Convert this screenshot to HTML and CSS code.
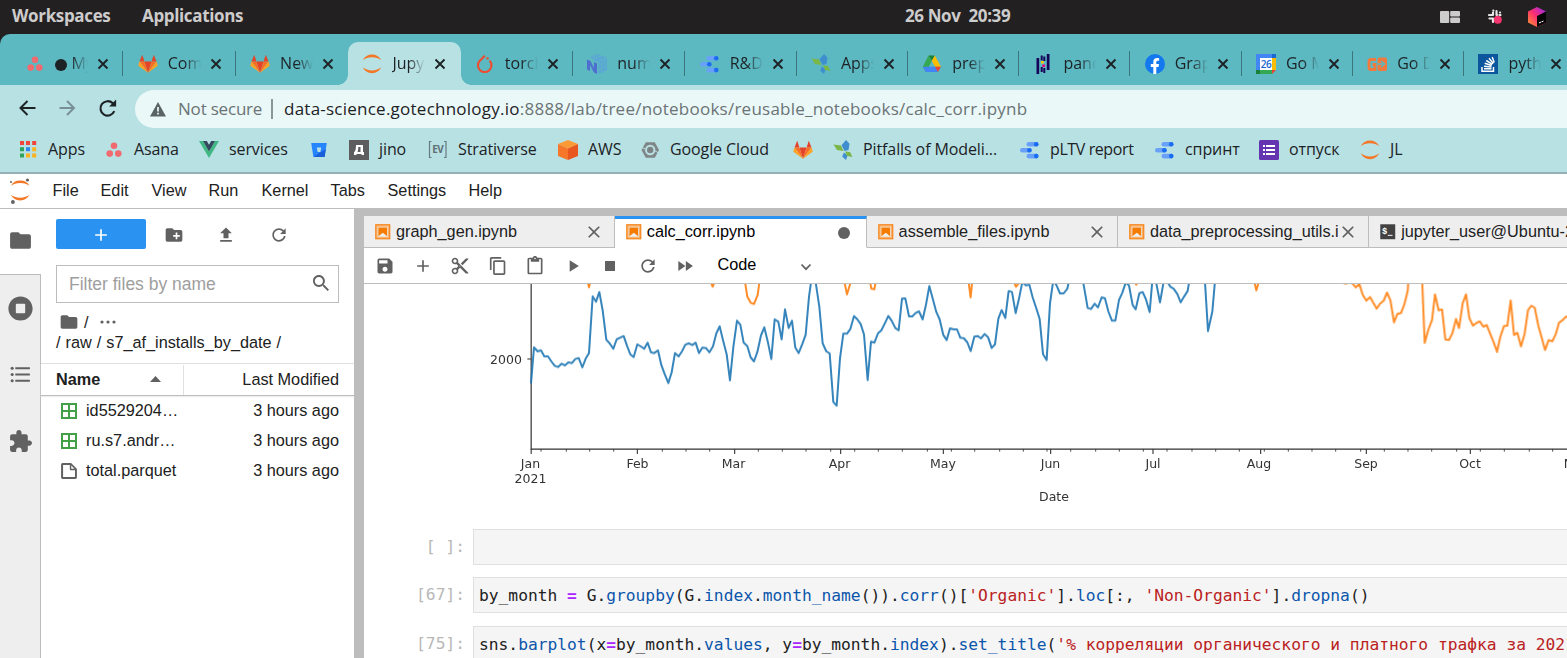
FILE: index.html
```html
<!DOCTYPE html>
<html lang="en">
<head>
<meta charset="utf-8">
<title>calc_corr.ipynb - JupyterLab</title>
<link rel="stylesheet" href="styles.css">
</head>
<body>
<svg class="defs" width="0" height="0">
  <symbol id="gitlab" viewBox="0 0 24 24"><path fill="#e24329" d="M12 22.5 16.3 9H7.7ZM1.8 9h5.9L5.1 1ZM22.2 9h-5.9L18.9 1Z"/><path fill="#fc6d26" d="M12 22.5 7.7 9H1.8ZM12 22.5 16.3 9h5.9Z"/><path fill="#fca326" d="M1.8 9 .4 13.2c-.1.4 0 .8.4 1.1L12 22.5ZM22.2 9l1.4 4.2c.1.4 0 .8-.4 1.1L12 22.5Z"/></symbol>
  <symbol id="asana" viewBox="0 0 20 20"><g fill="#f06a6f"><circle cx="10" cy="5.800" r="3.300"/><circle cx="5.700" cy="13.600" r="3.300"/><circle cx="14.300" cy="13.600" r="3.300"/></g></symbol>
  <symbol id="rings" viewBox="0 0 20 20"><g fill="#f37726"><path d="M.8 6.200C2.500 2.500 6 .5 10 .5s7.500 2 9.200 5.700C17 4.200 13.700 3.200 10 3.200S3 4.200.8 6.200Z"/><path d="M.8 13.300c1.700 3.700 5.200 5.900 9.200 5.900s7.500-2.200 9.200-5.900c-2.200 2-5.500 3.100-9.200 3.100s-7-1.100-9.200-3.100Z"/></g></symbol>
  <symbol id="studio" viewBox="0 0 20 20"><g fill="#6aa1f8"><rect x="6.500" y="2" width="12" height="4.600" rx="2.300"/><rect x="0" y="7.900" width="12" height="4.600" rx="2.300"/><rect x="6.500" y="13.800" width="12" height="4.600" rx="2.300"/></g><g fill="#1a6cf0"><circle cx="16.200" cy="4.300" r="2.300"/><circle cx="9.300" cy="10.200" r="2.300"/><circle cx="16.200" cy="16.100" r="2.300"/></g></symbol>
  <symbol id="flyer" viewBox="0 0 20 20"><path fill="#3e8ed0" d="M13 0 16.500 3.800 15.500 10 11.500 11 8.500 5.200Z"/><path fill="#7ab648" d="M.5 4.500 8 5.500 10.500 11 4 10Z"/><path fill="#3e8ed0" d="m11 12.500 3.500 3L13 20l-3.800-3.500Z"/><path fill="#7ab648" d="m12 11.500 5 .5 2.500 5-5.500-1Z"/></symbol>
  <symbol id="x" viewBox="0 0 12 12"><path d="m1.500 1.500 9 9m0-9-9 9" fill="none" stroke="#1d2225" stroke-width="1.900"/></symbol>
  <symbol id="close" viewBox="0 0 24 24"><path d="M19 6.410 17.590 5 12 10.590 6.410 5 5 6.410 10.590 12 5 17.590 6.410 19 12 13.410 17.590 19 19 17.590 13.410 12z"/></symbol>
  <symbol id="add" viewBox="0 0 24 24"><path d="M19 13h-6v6h-2v-6H5v-2h6V5h2v6h6v2z"/></symbol>
  <symbol id="folder" viewBox="0 0 24 24"><path d="M10 4H4c-1.100 0-1.990.9-1.990 2L2 18c0 1.100.9 2 2 2h16c1.100 0 2-.9 2-2V8c0-1.100-.9-2-2-2h-8l-2-2z"/></symbol>
  <symbol id="refresh" viewBox="0 0 18 18"><path d="M9 13.500c-2.490 0-4.500-2.010-4.500-4.500S6.510 4.500 9 4.500c1.240 0 2.360.52 3.170 1.330L10 8h5V3l-1.760 1.760C12.150 3.680 10.660 3 9 3 5.690 3 3.010 5.690 3.010 9S5.690 15 9 15c2.970 0 5.430-2.160 5.900-5h-1.520c-.46 2-2.240 3.500-4.380 3.500z"/></symbol>
  <symbol id="notebook" viewBox="0 0 22 22"><path fill="#fbb26c" d="M1.600 1.600h18.800v18.800H1.600z"/><path fill="#f6841a" d="M1.600 1.600h18.800v18.800H1.600zM2.900 2.900v16.200h16.200V2.900z" fill-rule="evenodd"/><path fill="#eee" d="M4.600 4.600h12.800v12.800H4.600z"/><path fill="#f57c00" d="m16.500 16.500-5.400-4.300-5.600 4.300v-11h11z"/></symbol>
  <symbol id="sheet" viewBox="0 0 22 22"><path fill="#43a047" d="M2.200 2.200v17.600h17.600V2.200H2.200zm15.400 7.700h-5.500V4.400h5.500v5.500zM9.900 4.400v5.500H4.400V4.400h5.500zm-5.500 7.700h5.500v5.500H4.400v-5.500zm7.700 5.500v-5.500h5.500v5.500h-5.500z"/></symbol>
</svg>

<header class="system">
  <span class="workspaces">Workspaces</span><span class="applications">Applications</span>
  <time class="clock">26 Nov&nbsp; 20:39</time>
  <div class="tray">
    <svg width="20" height="12" viewBox="0 0 20 12" fill="#cdcccc"><rect width="9.200" height="12" rx="1"/><rect x="10.200" width="9.800" height="5.500" rx="1"/><rect x="10.200" y="6.500" width="9.800" height="5.500" rx="1"/></svg>
    <svg width="16" height="16" viewBox="0 0 16 16"><g stroke="#e8e8e8" stroke-width="2.200" stroke-linecap="round"><path d="M6 3.500v2.500M9.500 2v4M3.500 6h2.500M2.500 9.500h3.500M6 10v3M10 6h.1M12.500 6h1M6.300 1.600h.1M2 6h.1M13 3.500h.1"/></g><circle cx="10.800" cy="10.800" r="4" fill="#f4356f"/></svg>
    <svg width="20" height="22" viewBox="0 0 20 22"><defs><linearGradient id="tb" x1="0" y1="1" x2="1" y2="0"><stop stop-color="#ff9a2b"/><stop offset=".5" stop-color="#fd2d72"/><stop offset="1" stop-color="#8f2cf5"/></linearGradient></defs><path fill="url(#tb)" d="m10 1 9 4.500v11L10 21l-9-4.500v-11z"/><path fill="#050505" d="m10 10 9-4.500v11L10 21z"/><path stroke="#fff" d="m12 17 2.500-1.200m.5 0 1.500-.8"/></svg>
  </div>
</header>

<nav class="tabs">
  <div class="tab"><svg class="fav"><use href="#asana"/></svg><span class="label"><i class="dot"></i> My</span><svg class="x"><use href="#x"/></svg></div>
  <div class="tab"><svg class="fav"><use href="#gitlab"/></svg><span class="label">Com</span><svg class="x"><use href="#x"/></svg></div>
  <div class="tab plain"><svg class="fav"><use href="#gitlab"/></svg><span class="label">New</span><svg class="x"><use href="#x"/></svg></div>
  <div class="tab active"><svg class="fav"><use href="#rings"/></svg><span class="label">Jupy</span><svg class="x"><use href="#x"/></svg></div>
  <div class="tab"><svg class="fav" viewBox="0 0 20 20"><path fill="none" stroke="#ee4c2c" stroke-width="2.100" d="M9.800 1.800 4.800 6.800a6.700 6.700 0 1 0 9.800 0"/><circle cx="12.500" cy="4.400" r="1.200" fill="#ee4c2c"/></svg><span class="label">torch</span><svg class="x"><use href="#x"/></svg></div>
  <div class="tab"><svg class="fav" viewBox="0 0 20 20"><path fill="#5b9fe0" opacity=".75" d="M3 3.500 10.500 0 20 3.500 11 8zM11 8.500l9-4V16l-9 4z"/><path stroke="#5cb8c1" stroke-width=".7" d="M12 8v12m3-14v12m3-13v12M11 12l9-4m-9 8 9-4M5 2l10 4M8 1l10 3M6 5l9-4"/><path fill="#4d6fd0" d="M0 5.500 3.500 7l3.500 7V8l3 1.500V20l-3-1.500L3 11v6l-3-1.500z"/></svg><span class="label">num</span><svg class="x"><use href="#x"/></svg></div>
  <div class="tab"><svg class="fav"><use href="#studio"/></svg><span class="label">R&amp;D</span><svg class="x"><use href="#x"/></svg></div>
  <div class="tab"><svg class="fav"><use href="#flyer"/></svg><span class="label">Apps</span><svg class="x"><use href="#x"/></svg></div>
  <div class="tab"><svg class="fav" viewBox="0 0 20 20"><path fill="#188038" d="M6.500 1.500h6.300l-3 5.200z"/><path fill="#34a853" d="M6.500 1.500 9.800 7 4 18 .8 13z"/><path fill="#fbbc04" d="M12.800 1.500 19 12.700h-6L9.800 6.700z"/><path fill="#4285f4" d="M3.900 12.700h9.500l2.500 5.300H3.800L.8 13z"/><path fill="#ea4335" d="M13 12.700h6L15.900 18z"/></svg><span class="label">prep</span><svg class="x"><use href="#x"/></svg></div>
  <div class="tab"><svg class="fav" viewBox="0 0 20 20"><path fill="#150458" d="M3.500 4h2.700v16H3.500zM13.800 0h2.700v16h-2.700zM7.700 1.500h2v5h-2zM10.300 2.500h2v4.500h-2zM7.700 13h2v5h-2zM10.300 14h2v5h-2z"/><path fill="#ffca00" d="M8 7h2.800v2.500H8z"/><path fill="#e70488" d="M9.300 10.500h2.800V13H9.300z"/></svg><span class="label">pand</span><svg class="x"><use href="#x"/></svg></div>
  <div class="tab"><svg class="fav" viewBox="0 0 20 20"><circle cx="10" cy="10" r="10" fill="#1479ef"/><path fill="#fff" d="M8.300 20v-7H5.800v-3h2.500V8c0-2.600 1.500-4 3.800-4 1 0 2 .2 2 .2v2.500h-1.200c-1.200 0-1.600.7-1.600 1.500V10H14l-.5 3h-2.200v7z"/></svg><span class="label">Grap</span><svg class="x"><use href="#x"/></svg></div>
  <div class="tab"><svg class="fav" viewBox="0 0 20 20"><path fill="#4285f4" d="M0 0h18v4H4v12H0z"/><path fill="#1a67d2" d="M16 0h4v4h-4z"/><path fill="#fbbc04" d="M16 4h4v12h-4z"/><path fill="#34a853" d="M0 16h16v4H0z"/><path fill="#188038" d="M0 16h4v4H0z"/><path fill="#ea4335" d="M16 16h4l-4 4z"/><path fill="#fff" d="M4 4h12v12H4z"/><text class="date" x="10" y="13.800" text-anchor="middle">26</text></svg><span class="label">Go M</span><svg class="x"><use href="#x"/></svg></div>
  <div class="tab"><svg class="fav" viewBox="0 0 20 20"><path fill="none" stroke="#f07a3e" stroke-width="2.800" d="M9 5.500H4c-1.500 0-2 .8-2 2v6c0 1.300.7 2 2 2h4v-5H5.500"/><rect x="10.500" y="3.500" width="9.500" height="13.500" rx="2" fill="#f07a3e"/><path stroke="#5cb8c1" stroke-width="1.500" d="M10 10h6M14 7l3.500 3-3.500 3" fill="none"/></svg><span class="label">Go D</span><svg class="x"><use href="#x"/></svg></div>
  <div class="tab last"><svg class="fav" viewBox="0 0 20 20"><path fill="#0b569c" d="M0 0h20v20H0z"/><path fill="none" stroke="#fff" stroke-width="1.500" d="M4 13v4.300h11.500V13M6 14.800h7.500M6 12.200l7.500.9M6.700 9.300l7 2.200M8.300 6.500l6 3.800M11 4.200l4.300 5.300M14.200 3l2 5.500"/></svg><span class="label">pyth</span><svg class="x"><use href="#x"/></svg></div>
</nav>

<div class="address">
  <svg class="back" width="20" height="20" viewBox="0 0 20 20"><path d="M18.500 10H3.500m7-7-7 7 7 7" fill="none" stroke="#1d2225" stroke-width="2"/></svg>
  <svg class="fwd" width="20" height="20" viewBox="0 0 20 20"><path d="M1.500 10H16m-7-7 7 7-7 7" fill="none" stroke="#789095" stroke-width="1.900"/></svg>
  <svg class="reload" width="20" height="20" viewBox="0 0 20 20"><path d="M16.300 13.200A7.200 7.200 0 1 1 14.800 5.300L16.500 7" fill="none" stroke="#1d2225" stroke-width="2.100"/><path d="M18.100 1.500v7h-7z" fill="#1d2225"/></svg>
  <div class="omnibox">
    <svg width="16" height="15" viewBox="0 0 16 15"><path fill="#5a6466" d="M8 0 16 14.500H0z"/><path stroke="#ebf8f8" stroke-width="1.700" d="M8 5v4.500M8 10.800v1.700"/></svg>
    <span class="secure">Not secure</span><span class="bar"></span>
    <span class="url"><b>data-science.gotechnology.io</b>:8888/lab/tree/notebooks/reusable_notebooks/calc_corr.ipynb</span>
  </div>
</div>

<div class="bookmarks">
  <a class="b1"><svg viewBox="0 0 20 20"><path fill="#f0453a" d="M2 1h4v4H2zM8 1h4v4H8zM14.200 1h4v4h-4z"/><path fill="#2fa35a" d="M2 7.200h4v4H2zM2 13.500h4v4H2z"/><path fill="#2f86ee" d="M8 7.200h4v4H8z"/><path fill="#fbb21f" d="M14.200 7.200h4v4h-4zM8 13.500h4v4H8zM14.200 13.500h4v4h-4z"/></svg><span>Apps</span></a>
  <a class="b2"><svg><use href="#asana"/></svg><span>Asana</span></a>
  <a class="b3"><svg viewBox="0 0 20 20"><path fill="#41b883" d="M0 1h4l6 10.500L16 1h4L10 18z"/><path fill="#34495e" d="M4 1h3.800L10 4.800 12.200 1H16l-6 10.500z"/></svg><span>services</span></a>
  <a class="b4"><svg viewBox="0 0 20 20"><path fill="#2684ff" d="M2.200 3h15.600l-2.200 14H4.400z"/><path fill="#1b5fd8" d="M11 12.500 16.800 9 15.600 17H4.600z"/><path fill="#b8e1e4" d="M7.800 7.500h4.400l-.8 4.500H8.600z"/></svg></a>
  <a class="b5"><svg viewBox="0 0 20 20"><path fill="#5d5d60" d="M0 0h20v20H0z"/><path fill="#fff" fill-rule="evenodd" d="M7 5h7v7h1v3h-2.500v-1h-5v1H5v-3c1.300 0 2-3 2-7zm2.300 2c0 2-.2 3.600-.8 5h3V7z"/></svg><span>jino</span></a>
  <a class="b6"><svg viewBox="0 0 20 20"><path fill="none" stroke="#667b80" stroke-width="1.200" d="M3.500 1.500h-2v16h2M16 1.500h2v16h-2"/><text class="ev" x="9.800" y="13.300" text-anchor="middle">EV</text></svg><span>Strativerse</span></a>
  <a class="b7"><svg viewBox="0 0 20 20"><path fill="#fc9b36" d="m10 0 10 4-10 4.500L0 4z"/><path fill="#f6762a" d="m0 4 10 4.500V20L0 16z"/><path fill="#e8571f" d="M20 4 10 8.500V20l10-4z"/></svg><span>AWS</span></a>
  <a class="b8"><svg viewBox="0 0 20 20"><path fill="#808587" d="M5.800 2.300h9L19 10l-4.200 7.700h-9L1.500 10z"/><circle cx="10.200" cy="10" r="4.200" fill="none" stroke="#b8e1e4" stroke-width="2"/><path stroke="#b8e1e4" d="m1 7 4 2m14 4-4-2"/><circle cx="10.200" cy="10" r="2" fill="#7b8284"/></svg><span>Google Cloud</span></a>
  <a class="b9"><svg><use href="#gitlab"/></svg></a>
  <a class="b10"><svg><use href="#flyer"/></svg><span>Pitfalls of Modeli...</span></a>
  <a class="b11"><svg><use href="#studio"/></svg><span>pLTV report</span></a>
  <a class="b12"><svg><use href="#studio"/></svg><span>спринт</span></a>
  <a class="b13"><svg viewBox="0 0 20 20"><rect width="20" height="20" rx="1.500" fill="#6535b1"/><path stroke="#fff" stroke-width="2" d="M4 6h2m1 0h9M4 10h2m1 0h9M4 14h2m1 0h9"/></svg><span>отпуск</span></a>
  <a class="b14"><svg><use href="#rings"/></svg><span>JL</span></a>
</div>

<nav class="menubar">
  <svg class="jp" width="22" height="28" viewBox="0 0 22 28"><g fill="#f37726"><path d="M2 9.800C3.500 6.400 7 4.500 11.200 4.500s7.700 1.900 9.200 5.300c-2-1.700-5.200-2.800-9.200-2.800S4 8.100 2 9.800Z"/><path d="M2 18.800c1.500 3.500 5 5.600 9.200 5.600s7.700-2.100 9.200-5.600c-2 1.700-5.200 2.900-9.200 2.900S4 20.500 2 18.800Z"/></g><g fill="#616161"><circle cx="2" cy="6" r="1"/><circle cx="18.500" cy="4" r="1.600"/><circle cx="3.900" cy="26" r="1.900"/></g></svg>
  <span class="m1">File</span><span class="m2">Edit</span><span class="m3">View</span><span class="m4">Run</span><span class="m5">Kernel</span><span class="m6">Tabs</span><span class="m7">Settings</span><span>Help</span>
</nav>

<main class="lab">
  <aside class="rail">
    <div class="current"><svg width="25" height="25"><use href="#folder"/></svg></div>
    <svg class="running" width="25" height="25" viewBox="0 0 512 512"><path d="M256 8C119 8 8 119 8 256s111 248 248 248 248-111 248-248S393 8 256 8zm96 328c0 8.800-7.200 16-16 16H176c-8.800 0-16-7.200-16-16V176c0-8.800 7.200-16 16-16h160c8.800 0 16 7.200 16 16v160z"/></svg>
    <svg class="toc" width="25" height="25" viewBox="0 0 24 24"><path d="M7 5h14v2H7zM7 11h14v2H7zM7 17h14v2H7z"/><circle cx="4" cy="6" r="1.500"/><circle cx="4" cy="12" r="1.500"/><circle cx="4" cy="18" r="1.500"/></svg>
    <svg class="ext" width="25" height="25" viewBox="0 0 24 24"><path d="M20.500 11H19V7c0-1.100-.9-2-2-2h-4V3.500C13 2.120 11.880 1 10.500 1S8 2.120 8 3.500V5H4c-1.100 0-1.990.9-1.990 2v3.800H3.500c1.490 0 2.700 1.210 2.700 2.700s-1.210 2.700-2.700 2.700H2V20c0 1.100.9 2 2 2h3.800v-1.500c0-1.490 1.210-2.700 2.700-2.700 1.490 0 2.700 1.210 2.700 2.700V22H17c1.100 0 2-.9 2-2v-4h1.500c1.380 0 2.500-1.120 2.500-2.500S21.880 11 20.500 11z"/></svg>
  </aside>

  <section class="files">
    <div class="actions">
      <button class="launch"><svg width="20" height="20"><use href="#add"/></svg></button>
      <svg class="newdir" width="20" height="20" viewBox="0 0 24 24"><path d="M20 6h-8l-2-2H4c-1.110 0-1.990.89-1.990 2L2 18c0 1.110.89 2 2 2h16c1.110 0 2-.89 2-2V8c0-1.110-.89-2-2-2zm-1 8h-3v3h-2v-3h-3v-2h3V9h2v3h3v2z"/></svg>
      <svg class="upload" width="20" height="20" viewBox="0 0 24 24"><path d="M9 16h6v-6h4l-7-7-7 7h4zm-4 2h14v2H5z"/></svg>
      <svg class="reloaddir" width="20" height="20"><use href="#refresh"/></svg>
    </div>
    <div class="filter"><span>Filter files by name</span><svg width="20" height="20" viewBox="0 0 18 18"><path d="M12.100 10.900h-.7l-.2-.2c.8-.9 1.300-2.200 1.300-3.500 0-3-2.400-5.400-5.400-5.400S1.800 4.200 1.800 7.100s2.400 5.400 5.400 5.400c1.300 0 2.500-.5 3.500-1.300l.2.200v.7l4.100 4.100 1.200-1.200-4.100-4.100zm-5 0c-2.100 0-3.700-1.700-3.700-3.700s1.700-3.700 3.700-3.700 3.700 1.700 3.700 3.700-1.600 3.700-3.700 3.700z"/></svg></div>
    <div class="crumbs">
      <div class="root"><svg width="20" height="20"><use href="#folder"/></svg><span>/</span><svg class="more" width="16" height="4" viewBox="0 0 16 4"><circle cx="2" cy="2" r="1.600"/><circle cx="8" cy="2" r="1.600"/><circle cx="14" cy="2" r="1.600"/></svg></div>
      <div class="path">/ raw / s7_af_installs_by_date /</div>
    </div>
    <div class="thead"><div class="name">Name<svg width="11" height="6" viewBox="0 0 11 6"><path d="M0 6 5.500 0 11 6z"/></svg></div><div class="mod">Last Modified</div></div>
    <div class="row"><svg width="20" height="20"><use href="#sheet"/></svg><span>id5529204…</span><span class="ago">3 hours ago</span></div>
    <div class="row"><svg width="20" height="20"><use href="#sheet"/></svg><span>ru.s7.andr…</span><span class="ago">3 hours ago</span></div>
    <div class="row"><svg width="20" height="20" viewBox="0 0 22 22"><path d="M19.300 8.200l-5.500-5.500c-.3-.3-.7-.5-1.200-.5H3.900c-.8.1-1.600.9-1.600 1.800v14.100c0 .9.7 1.600 1.600 1.600h14.200c.9 0 1.600-.7 1.600-1.600V9.400c.1-.5-.1-.9-.4-1.200zm-5.800-3.300l3.400 3.600h-3.400V4.900zm3.900 12.700H4.700c-.1 0-.2 0-.2-.2V4.700c0-.2.1-.3.2-.3h7.200v4.400s0 .8.3 1.100c.3.3 1.100.3 1.100.3h4.300v7.200s-.1.2-.2.2z"/></svg><span>total.parquet</span><span class="ago">3 hours ago</span></div>
  </section>

  <section class="dock">
    <div class="docktabs">
      <div class="dt"><svg class="nb"><use href="#notebook"/></svg><span>graph_gen.ipynb</span><svg class="cl"><use href="#close"/></svg></div>
      <div class="dt on"><svg class="nb"><use href="#notebook"/></svg><span>calc_corr.ipynb</span><i class="dirty"></i></div>
      <div class="dt"><svg class="nb"><use href="#notebook"/></svg><span>assemble_files.ipynb</span><svg class="cl"><use href="#close"/></svg></div>
      <div class="dt"><svg class="nb"><use href="#notebook"/></svg><span>data_preprocessing_utils.i</span><svg class="cl"><use href="#close"/></svg></div>
      <div class="dt"><svg class="nb" viewBox="0 0 22 22"><path fill="#424242" d="M1.600 1.600h18.800v18.800H1.600z"/><text class="sh" x="3.800" y="13.500">$</text><path stroke="#fff" stroke-width="1.200" d="M11 15.500h6"/></svg><span>jupyter_user@Ubuntu-2</span></div>
    </div>
    <div class="tools">
      <svg viewBox="0 0 24 24"><path d="M17 3H5c-1.110 0-2 .9-2 2v14c0 1.100.89 2 2 2h14c1.100 0 2-.9 2-2V7l-4-4zm-5 16c-1.660 0-3-1.340-3-3s1.340-3 3-3 3 1.340 3 3-1.340 3-3 3zm3-10H5V5h10v4z"/></svg>
      <svg><use href="#add"/></svg>
      <svg viewBox="0 0 24 24"><path d="M9.640 7.640c.23-.5.36-1.050.36-1.640 0-2.210-1.790-4-4-4S2 3.790 2 6s1.790 4 4 4c.59 0 1.140-.13 1.640-.36L10 12l-2.360 2.360C7.140 14.130 6.590 14 6 14c-2.210 0-4 1.790-4 4s1.790 4 4 4 4-1.790 4-4c0-.59-.13-1.140-.36-1.640L12 14l7 7h3v-1L9.640 7.640zM6 8c-1.100 0-2-.89-2-2s.9-2 2-2 2 .89 2 2-.9 2-2 2zm0 12c-1.100 0-2-.89-2-2s.9-2 2-2 2 .89 2 2-.9 2-2 2zm6-7.500c-.28 0-.5-.22-.5-.5s.22-.5.5-.5.5.22.5.5-.22.5-.5.5zM19 3l-6 6 2 2 7-7V3z"/></svg>
      <svg viewBox="0 0 18 18"><path d="M11.900 1H3.200c-.8 0-1.500.7-1.500 1.500v10.200h1.500V2.500h8.700V1zM14.100 3.900h-8c-.8 0-1.500.7-1.500 1.500v10.200c0 .8.7 1.500 1.500 1.500h8c.8 0 1.500-.7 1.500-1.500V5.400c-.1-.8-.7-1.500-1.500-1.500zm0 11.600h-8V5.400h8v10.100z"/></svg>
      <svg viewBox="0 0 24 24"><path d="M19 2h-4.180C14.400.84 13.300 0 12 0c-1.300 0-2.400.84-2.820 2H5c-1.100 0-2 .9-2 2v16c0 1.100.9 2 2 2h14c1.100 0 2-.9 2-2V4c0-1.100-.9-2-2-2zm-7 0c.55 0 1 .45 1 1s-.45 1-1 1-1-.45-1-1 .45-1 1-1zm7 18H5V4h2v3h10V4h2v16z"/></svg>
      <svg viewBox="0 0 24 24"><path d="M8 5v14l11-7z"/></svg>
      <svg viewBox="0 0 24 24"><path d="M6 6h12v12H6z"/></svg>
      <svg><use href="#refresh"/></svg>
      <svg viewBox="0 0 24 24"><path d="M4 18l8.500-6L4 6v12zm9-12v12l8.500-6L13 6z"/></svg>
      <span class="kind">Code</span>
      <svg class="chev" viewBox="0 0 12 8"><path d="m1.500 1.500 4.500 4.700 4.500-4.700" fill="none" stroke="#616161" stroke-width="1.700"/></svg>
    </div>
    <div class="notebook">
      <svg class="chart" width="1094" height="245" viewBox="473 284 1094 245">
        <g transform="translate(470 280) scale(.33333)" fill="none">
          <path stroke="#333" stroke-width="3.600" d="M183.500 0V507.500H3300"/>
          <path stroke="#333" stroke-width="3.300" d="M172 237h11M183.500 507v15M502 507v15M794 507v15M1112 507v15M1420 507v15M1742 507v15M2049 507v15M2372 507v15M2689 507v15M3001 507v15"/>
          <path stroke="#333" stroke-width="2.600" d="M213 507v8M289 507v8M359 507v8M431 507v8M577 507v8M648 507v8M719 507v8M865 507v8M937 507v8M1008 507v8M1082 507v8M1154 507v8M1225 507v8M1297 507v8M1372 507v8M1444 507v8M1514 507v8M1589 507v8M1660 507v8M1731 507v8M1802 507v8M1877 507v8M1948 507v8M2020 507v8M2091 507v8M2166 507v8M2237 507v8M2308 507v8M2383 507v8M2455 507v8M2526 507v8M2597 507v8M2672 507v8M2743 507v8M2814 507v8M2885 507v8M2960 507v8M3031 507v8M3103 507v8M3178 507v8M3248 507v8"/>
          <g stroke-width="6" stroke-linejoin="round" opacity=".9">
            <g stroke="#1f77b4">
              <polyline points="183,310 192,202 203,214 213,211 223,229 234,229 244,244 254,257 264,261 275,251 285,256 295,247 306,249 316,237 326,234 337,262 347,236 357,219 368,49 378,65 388,36 398,91 409,179 419,190 430,206 440,178 450,173 461,168 471,197 481,223 491,231 502,193 512,199 523,206 533,188 543,217 553,219 564,211 574,255 584,282 595,309 605,277 615,219 626,229 636,214 646,194 656,190 667,195 677,188 687,219 697,203 708,204 718,217 729,199 739,160 749,139 759,180 770,223 780,301 790,201 801,122 811,134 821,188 832,198 842,232 852,244 862,216 873,166 883,142 894,188 904,237 914,118 925,125 935,178 945,88 956,144 966,122 976,203 986,219 997,192 1007,164 1017,50 1024,0 1036,0 1048,80 1058,190 1069,214 1079,220 1090,366 1100,377 1110,235 1120,161 1131,161 1141,147 1152,108 1162,118 1172,132 1182,163 1193,300 1203,185 1213,188 1224,160 1234,151 1244,131 1255,108 1265,122 1276,144 1286,151 1296,56 1306,55 1317,109 1327,109 1337,99 1347,94 1358,118 1368,74 1378,18 1389,59 1399,96 1409,118 1420,165 1430,180 1440,145 1451,148 1461,148 1471,173 1482,175 1492,187 1502,213 1513,170 1523,168 1533,175 1544,162 1554,171 1565,204 1575,193 1585,116 1595,90 1606,114 1616,33 1626,36 1637,99 1647,56 1657,6 1668,16 1678,14 1688,52 1699,85 1709,117 1719,222 1730,240 1740,70 1750,0 1760,17 1770,40 1781,40 1792,26 1800,-10 1834,-20 1842,20 1853,84 1863,87 1874,71 1884,82 1895,52 1905,55 1915,94 1926,122 1936,122 1947,60 1957,38 1967,8 1977,16 1988,75 1997,88 2008,40 2018,36 2028,58 2039,96 2048,-10 2058,5 2070,67 2081,5 2091,4 2101,20 2111,26 2122,42 2132,67 2142,50 2153,33 2160,-10 2204,-10 2214,153 2227,95 2237,-20"/>
            </g>
            <g stroke="#ff7f0e">
              <path d="M352 0l5 22 5-22M720 0l8 20 8-20M825 5l7 45 10 18 10 4 11-27 6-45M1122 0l9 43 13-43M1200 5l4 21 9 2 5-28M1495 0l7 52 5-52M1632 5l6 15 9-12M1994 0l5 14 5-14M2352 0l7 31 9-31"/>
              <polyline transform="translate(2310)" points="310,8 318,11 328,5 337,10 347,22 358,12 368,44 379,62 390,51 400,69 410,86 420,71 431,62 441,38 451,60 462,127 472,102 483,99 493,73 503,33 506,-10 546,-10 554,189 565,149 576,120 585,43 596,91 606,88 616,178 627,180 637,160 648,117 657,144 668,70 678,43 688,114 699,137 709,129 719,124 730,140 740,135 750,160 761,187 771,215 781,170 792,138 802,137 812,61 822,165 832,158 843,199 854,160 864,90 874,77 884,83 895,137 905,173 915,210 926,180 937,184 947,163 957,128 968,120 978,110 990,108"/>
            </g>
          </g>
        </g>
        <g class="ticks">
          <text x="506" y="364">2000</text><text x="530.500" y="468">Jan</text><text x="530.500" y="483">2021</text><text x="637.500" y="468">Feb</text><text x="733.500" y="468">Mar</text><text x="839.500" y="468">Apr</text><text x="943" y="468">May</text><text x="1050.500" y="468">Jun</text><text x="1153" y="468">Jul</text><text x="1259" y="468">Aug</text><text x="1366" y="468">Sep</text><text x="1470" y="468">Oct</text><text x="1576" y="468">Nov</text><text x="1054" y="500.500">Date</text>
        </g>
      </svg>
      <div class="cell"><span class="prompt">[ ]:</span><pre></pre></div>
      <div class="cell"><span class="prompt">[67]:</span><pre>by_month <b>=</b> G.<i>groupby</i>(G.<i>index</i>.<i>month_name</i>()).<i>corr</i>()[<q>'Organic'</q>].<i>loc</i>[:, <q>'Non-Organic'</q>].<i>dropna</i>()</pre></div>
      <div class="cell third"><span class="prompt">[75]:</span><pre>sns.<i>barplot</i>(x<b>=</b>by_month.<i>values</i>, y<b>=</b>by_month.<i>index</i>).<i>set_title</i>(<q>'% корреляции органического и платного трафка за 2021'</q>)</pre></div>
    </div>
  </section>
</main>
</body>
</html>
```
FILE: styles.css
```css
* { box-sizing: border-box; }
body {
  margin: 0;
  width: 1567px;
  height: 658px;
  overflow: hidden;
  display: flex;
  flex-direction: column;
  background: #232021;
  font-family: "Open Sans", "Noto Sans", sans-serif;
  color: #1d2225;
}
svg { display: block; flex: none; }
.defs { position: absolute; }

/* desktop panel */
.system {
  height: 34px;
  flex: none;
  display: grid;
  grid-template-columns: 130px 763px 1fr auto;
  padding: 0 20px 0 12px;
  align-items: center;
  color: #cdcccc;
  font-weight: 700;
  font-size: 17px;
  letter-spacing: -.35px;
  line-height: 32px;
}
.workspaces, .applications, .clock { white-space: nowrap; height: 34px; }
.clock { letter-spacing: -.4px; }
.tray { display: flex; align-items: center; gap: 24px; }
.tray svg:nth-child(1) { margin-right: 3px; }

/* browser tab strip */
.tabs {
  height: 51px;
  flex: none;
  display: flex;
  padding: 8px 0 0 11px;
  background: #5cb8c1;
  border-top-left-radius: 10px;
  overflow: hidden;
}
.tab {
  position: relative;
  width: 112.400px;
  height: 43px;
  flex: none;
  display: flex;
  align-items: center;
  padding-left: 14.300px;
  font-size: 16px;
}
.tab:nth-child(n+7) { width: 111.250px; }
.tab::after {
  content: "";
  width: 1px;
  height: 25px;
  margin-left: auto;
  background: #3c757b;
}
.tab.plain::after, .tab.last::after { visibility: hidden; }
.fav { width: 20px; height: 20px; }
.label {
  width: 33px;
  margin: 0 9px 0 10px;
  line-height: 24px;
  padding-bottom: 1px;
  white-space: nowrap;
  overflow: hidden;
  mask-image: linear-gradient(90deg, #000 50%, transparent);
}
.dot {
  display: inline-block;
  width: 12px;
  height: 12px;
  border-radius: 50%;
  background: #1d2225;
  vertical-align: -2px;
}
.x { width: 12px; height: 12px; }
.tab.active { background: #b8e1e4; border-radius: 10px 10px 0 0; }
.tab.active::before, .tab.active::after {
  content: "";
  position: absolute;
  bottom: 0;
  width: 10px;
  height: 10px;
}
.tab.active::before { left: -10px; background: radial-gradient(circle at 0 0, transparent 9.500px, #b8e1e4 10px); }
.tab.active::after { right: -10px; background: radial-gradient(circle at 100% 0, transparent 9.500px, #b8e1e4 10px); }
.date { font: 600 10px "Open Sans", sans-serif; letter-spacing: -.5px; fill: #1a67d2; }

/* address bar */
.address {
  height: 43px;
  flex: none;
  display: flex;
  align-items: center;
  padding: 5px 0 0 17px;
  background: #b8e1e4;
}
.address .fwd { margin-left: 21px; }
.address .reload { margin-left: 20px; }
.address > svg { margin-top: -2px; }
.omnibox {
  flex: 1;
  height: 38px;
  margin-left: 17px;
  padding-left: 15px;
  display: flex;
  align-items: center;
  background: #ebf8f8;
  border-radius: 19px 0 0 19px;
  font-size: 17px;
  color: #6a7375;
  white-space: nowrap;
}
.secure { width: 84px; margin-left: 12px; padding-bottom: 2px; letter-spacing: -.2px; }
.bar { width: 2px; height: 20px; margin: 0 11px 0 9px; background: #8b9697; }
.url { padding-bottom: 2px; letter-spacing: .24px; }
.url b { font-weight: 400; color: #1d2225; }

/* bookmarks */
.bookmarks {
  height: 46px;
  flex: none;
  display: flex;
  align-items: center;
  padding-left: 18px;
  background: #b8e1e4;
  border-bottom: 2px solid #93b1b4;
  font-size: 16px;
  letter-spacing: -.1px;
  white-space: nowrap;
}
.bookmarks a { display: flex; align-items: center; gap: 10px; flex: none; }
.bookmarks span { padding-bottom: 2px; }
.bookmarks svg { width: 20px; height: 20px; }
.b1 { width: 86px; }
.b2 { width: 95px; }
.b3 { width: 110px; }
.b4 { width: 40px; }
.b5 { width: 79px; }
.b6 { width: 130px; }
.b7 { width: 82px; }
.b8 { width: 153px; }
.b9 { width: 40px; }
.b10 { width: 187px; }
.b11 { width: 135px; letter-spacing: -.4px; }
.b12 { width: 104px; }
.b13 { width: 101px; }
.ev { font: 700 10px "Open Sans", sans-serif; letter-spacing: -.6px; fill: #5d7074; }

/* JupyterLab menu */
.menubar {
  height: 35px;
  flex: none;
  display: flex;
  align-items: center;
  padding-left: 9px;
  background: #fff;
  border-bottom: 1px solid #bdbdbd;
  font: 16.250px "Liberation Sans", Arial, sans-serif;
  color: #212121;
}
.menubar span { padding-bottom: 2px; }
.jp { margin: -2px 21.500px 0 0; }
.m1 { width: 48px; }
.m2 { width: 51px; }
.m3 { width: 57px; }
.m4 { width: 53px; }
.m5 { width: 69px; }
.m6 { width: 57px; }
.m7 { width: 81px; }

.lab {
  flex: 1;
  min-height: 0;
  display: flex;
  background: #fff;
  font: 16.250px "Liberation Sans", Arial, sans-serif;
  color: #212121;
}
.lab svg { fill: #616161; }

.rail {
  width: 41px;
  flex: none;
  display: flex;
  flex-direction: column;
  background: #eee;
  border-right: 1px solid #bdbdbd;
}
.rail > svg { margin-left: 7.500px; }
.current {
  width: 41px;
  height: 66px;
  flex: none;
  padding: 19px 0 0 7.500px;
  background: #fff;
  border-bottom: 1px solid #bdbdbd;
}
.running { margin-top: 20.500px; }
.toc { margin-top: 41px; }
.ext { margin-top: 42px; }

/* file browser */
.files { width: 313px; flex: none; display: flex; flex-direction: column; }
.actions { display: flex; align-items: center; padding: 10px 0 0 15px; height: 40px; }
.actions > svg { margin-top: 1px; }
.launch {
  width: 90px;
  height: 30px;
  padding: 0;
  display: grid;
  place-items: center;
  border: 0;
  border-radius: 2px;
  background: #2a92f0;
}
.launch svg { fill: #fff; margin-top: 2px; }
.newdir { margin-left: 18px; }
.upload { margin-left: 32px; }
.reloaddir { margin-left: 33px; }
.filter {
  height: 38px;
  margin: 16px 15px 0;
  padding: 0 7px 0 12px;
  display: flex;
  align-items: center;
  justify-content: space-between;
  border: 1px solid #bdbdbd;
  font-size: 17.500px;
  color: #9e9e9e;
}
.filter svg { margin-top: -2px; }
.crumbs { height: 60px; padding: 9px 0 0 15px; line-height: 20px; }
.root { display: flex; align-items: center; padding-left: 2.500px; height: 20px; }
.root span { margin: 0 11.500px 0 5.500px; }
.path { word-spacing: .5px; }
.thead {
  height: 33px;
  display: flex;
  align-items: stretch;
  border-top: 1px solid #e0e0e0;
  border-bottom: 1px solid #bdbdbd;
  box-shadow: 0 1px 1px #eee;
  line-height: 31px;
}
.name {
  width: 143px;
  margin-top: 1px;
  padding: 0 22px 2px 15px;
  display: flex;
  justify-content: space-between;
  align-items: center;
  border-right: 1px solid #e0e0e0;
  font-weight: 700;
}
.mod { flex: 1; text-align: right; padding-right: 15px; }
.row { height: 30px; display: flex; align-items: center; padding: 0 15px 0 18px; }
.row span { margin-left: 7px; padding-bottom: 2px; }
.row .ago { margin-left: auto; }

/* dock area */
.dock { flex: 1; min-width: 0; display: flex; flex-direction: column; border-left: 10px solid #bdbdbd; }
.docktabs {
  height: 39px;
  flex: none;
  display: flex;
  padding-top: 7px;
  background: #bdbdbd;
  overflow: hidden;
}
.dt {
  width: 251.300px;
  flex: none;
  height: 32px;
  display: flex;
  align-items: center;
  padding-left: 10px;
  background: #eee;
  border-right: 1px solid #bdbdbd;
  border-bottom: 1px solid #bdbdbd;
}
.dt.on {
  background: #fff;
  border-bottom-color: #fff;
  border-top: 3px solid #2a92f0;
  color: #000;
  padding: 0 0 3px 9.500px;
}
.dt.on .nb { margin-top: 1px; }
.nb { width: 17.500px; height: 17.500px; }
.dt span { width: 188px; margin: 0 0 0 4.500px; overflow: hidden; white-space: nowrap; }
.cl { width: 20px; height: 20px; }
.dirty { width: 12px; height: 12px; border-radius: 50%; background: #616161; margin: 3px 0 0 3.500px; }
.sh { font: 700 11px "Liberation Mono", monospace; fill: #fff; }
.tools {
  height: 36px;
  flex: none;
  display: flex;
  align-items: center;
  gap: 17.500px;
  padding-left: 11px;
  border-bottom: 1px solid #bdbdbd;
}
.tools svg { width: 20px; height: 20px; }
.kind { width: 64px; margin: -2px 0 0 5px; color: #000; }
.tools .chev { width: 12px; height: 8px; margin: 3px 0 0 1px; }

.notebook { flex: 1; min-height: 0; overflow: hidden; display: flex; flex-direction: column; }
.chart { margin-left: 109px; }
.ticks { font: 12.500px "DejaVu Sans", sans-serif; fill: #333; text-anchor: middle; }
.cell {
  height: 36px;
  flex: none;
  margin-bottom: 12px;
  display: flex;
  font: 16.250px/36px "DejaVu Sans Mono", monospace;
}
.cell.third { margin-top: 1px; }
.prompt { width: 109px; padding-right: 8px; flex: none; text-align: right; color: #b8b8b8; }
.cell pre {
  flex: 1;
  margin: 0;
  padding-left: 5px;
  min-width: 0;
  overflow: hidden;
  border: 1px solid #e0e0e0;
  border-right: 0;
  background: #f5f5f5;
  font: inherit;
  line-height: 35px;
}
.cell b { color: #a2f; }
.cell i { font-style: normal; color: #0b55ab; }
.cell q { quotes: none; color: #ba2121; }
```
